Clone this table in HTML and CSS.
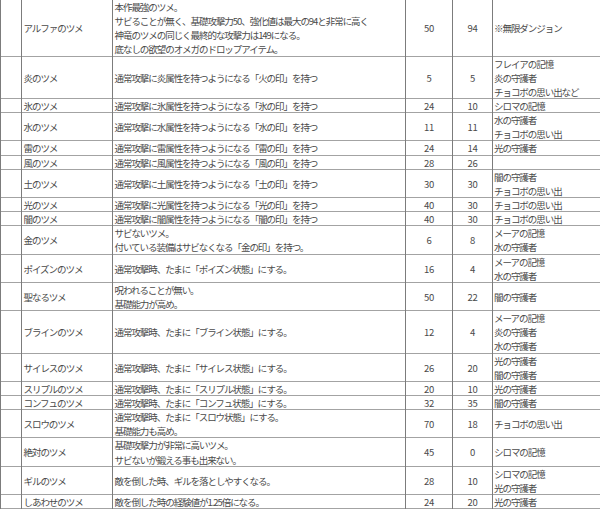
FILE: index.html
```html
<!DOCTYPE html>
<html lang="ja">
<head>
<meta charset="utf-8">
<title>ツメ一覧</title>
<link rel="stylesheet" href="styles.css">
</head>
<body>
<table class="claws">
  <colgroup>
    <col class="c-blank">
    <col class="c-name">
    <col class="c-desc">
    <col class="c-num">
    <col class="c-num2">
    <col class="c-src">
  </colgroup>
  <tbody>
    <tr>
      <td class="blank"></td>
      <td class="name">アルファのツメ</td>
      <td class="desc">本作最強のツメ。<br>サビることが無く、基礎攻撃力50、強化値は最大の94と非常に高く<br>神竜のツメの同じく最終的な攻撃力は149になる。<br>底なしの欲望のオメガのドロップアイテム。</td>
      <td class="num">50</td>
      <td class="num">94</td>
      <td class="src">※無限ダンジョン</td>
    </tr>
    <tr>
      <td class="blank"></td>
      <td class="name">炎のツメ</td>
      <td class="desc">通常攻撃に炎属性を持つようになる「火の印」を持つ</td>
      <td class="num">5</td>
      <td class="num">5</td>
      <td class="src">フレイアの記憶<br>炎の守護者<br>チョコボの思い出など</td>
    </tr>
    <tr>
      <td class="blank"></td>
      <td class="name">氷のツメ</td>
      <td class="desc">通常攻撃に氷属性を持つようになる「氷の印」を持つ</td>
      <td class="num">24</td>
      <td class="num">10</td>
      <td class="src">シロマの記憶</td>
    </tr>
    <tr>
      <td class="blank"></td>
      <td class="name">水のツメ</td>
      <td class="desc">通常攻撃に水属性を持つようになる「水の印」を持つ</td>
      <td class="num">11</td>
      <td class="num">11</td>
      <td class="src">水の守護者<br>チョコボの思い出</td>
    </tr>
    <tr>
      <td class="blank"></td>
      <td class="name">雷のツメ</td>
      <td class="desc">通常攻撃に雷属性を持つようになる「雷の印」を持つ</td>
      <td class="num">24</td>
      <td class="num">14</td>
      <td class="src">光の守護者</td>
    </tr>
    <tr>
      <td class="blank"></td>
      <td class="name">風のツメ</td>
      <td class="desc">通常攻撃に風属性を持つようになる「風の印」を持つ</td>
      <td class="num">28</td>
      <td class="num">26</td>
      <td class="src"></td>
    </tr>
    <tr>
      <td class="blank"></td>
      <td class="name">土のツメ</td>
      <td class="desc">通常攻撃に土属性を持つようになる「土の印」を持つ</td>
      <td class="num">30</td>
      <td class="num">30</td>
      <td class="src">闇の守護者<br>チョコボの思い出</td>
    </tr>
    <tr>
      <td class="blank"></td>
      <td class="name">光のツメ</td>
      <td class="desc">通常攻撃に光属性を持つようになる「光の印」を持つ</td>
      <td class="num">40</td>
      <td class="num">30</td>
      <td class="src">チョコボの思い出</td>
    </tr>
    <tr>
      <td class="blank"></td>
      <td class="name">闇のツメ</td>
      <td class="desc">通常攻撃に闇属性を持つようになる「闇の印」を持つ</td>
      <td class="num">40</td>
      <td class="num">30</td>
      <td class="src">チョコボの思い出</td>
    </tr>
    <tr>
      <td class="blank"></td>
      <td class="name">金のツメ</td>
      <td class="desc">サビないツメ。<br>付いている装備はサビなくなる「金の印」を持つ。</td>
      <td class="num">6</td>
      <td class="num">8</td>
      <td class="src">メーアの記憶<br>水の守護者</td>
    </tr>
    <tr>
      <td class="blank"></td>
      <td class="name">ポイズンのツメ</td>
      <td class="desc">通常攻撃時、たまに「ポイズン状態」にする。</td>
      <td class="num">16</td>
      <td class="num">4</td>
      <td class="src">メーアの記憶<br>水の守護者</td>
    </tr>
    <tr>
      <td class="blank"></td>
      <td class="name">聖なるツメ</td>
      <td class="desc">呪われることが無い。<br>基礎能力が高め。</td>
      <td class="num">50</td>
      <td class="num">22</td>
      <td class="src">闇の守護者</td>
    </tr>
    <tr>
      <td class="blank"></td>
      <td class="name">ブラインのツメ</td>
      <td class="desc">通常攻撃時、たまに「ブライン状態」にする。</td>
      <td class="num">12</td>
      <td class="num">4</td>
      <td class="src">メーアの記憶<br>炎の守護者<br>水の守護者</td>
    </tr>
    <tr>
      <td class="blank"></td>
      <td class="name">サイレスのツメ</td>
      <td class="desc">通常攻撃時、たまに「サイレス状態」にする。</td>
      <td class="num">26</td>
      <td class="num">20</td>
      <td class="src">光の守護者<br>闇の守護者</td>
    </tr>
    <tr>
      <td class="blank"></td>
      <td class="name">スリプルのツメ</td>
      <td class="desc">通常攻撃時、たまに「スリプル状態」にする。</td>
      <td class="num">20</td>
      <td class="num">10</td>
      <td class="src">光の守護者</td>
    </tr>
    <tr>
      <td class="blank"></td>
      <td class="name">コンフュのツメ</td>
      <td class="desc">通常攻撃時、たまに「コンフュ状態」にする。</td>
      <td class="num">32</td>
      <td class="num">35</td>
      <td class="src">闇の守護者</td>
    </tr>
    <tr>
      <td class="blank"></td>
      <td class="name">スロウのツメ</td>
      <td class="desc">通常攻撃時、たまに「スロウ状態」にする。<br>基礎能力も高め。</td>
      <td class="num">70</td>
      <td class="num">18</td>
      <td class="src">チョコボの思い出</td>
    </tr>
    <tr>
      <td class="blank"></td>
      <td class="name">絶対のツメ</td>
      <td class="desc">基礎攻撃力が非常に高いツメ。<br>サビないが鍛える事も出来ない。</td>
      <td class="num">45</td>
      <td class="num">0</td>
      <td class="src">シロマの記憶</td>
    </tr>
    <tr>
      <td class="blank"></td>
      <td class="name">ギルのツメ</td>
      <td class="desc">敵を倒した時、ギルを落としやすくなる。</td>
      <td class="num">28</td>
      <td class="num">10</td>
      <td class="src">シロマの記憶<br>光の守護者</td>
    </tr>
    <tr>
      <td class="blank"></td>
      <td class="name">しあわせのツメ</td>
      <td class="desc">敵を倒した時の経験値が1.25倍になる。</td>
      <td class="num">24</td>
      <td class="num">20</td>
      <td class="src">光の守護者</td>
    </tr>
  </tbody>
</table>
</body>
</html>
```

FILE: styles.css
```css
html, body {
  margin: 0;
  padding: 0;
  background: #ffffff;
}

body {
  width: 600px;
  height: 509px;
  overflow: hidden;
}

.claws {
  border-collapse: separate;
  border-spacing: 0;
  table-layout: fixed;
  width: 600px;
  font-family: "Noto Sans CJK JP", "Noto Sans", sans-serif;
  font-size: 9.5px;
  letter-spacing: -1.05px;
  line-height: 14.139px;
  color: #4a4a4a;
}

.c-blank { width: 22px; }
.c-name  { width: 91px; }
.c-desc  { width: 293px; }
.c-num   { width: 47px; }
.c-num2  { width: 40px; }
.c-src   { width: 107px; }

.claws td {
  padding: 0 0 0 1.5px;
  vertical-align: middle;
  white-space: nowrap;
  overflow: hidden;
  box-shadow: inset -1px 0 0 #7c7c7c, inset 0 -1px 0 #a3a3a3;
}

.claws td.blank {
  box-shadow: inset 1px 0 0 #7c7c7c, inset -1px 0 0 #7c7c7c, inset 0 -1px 0 #a3a3a3;
}

.claws td.num {
  text-align: center;
  letter-spacing: -0.2px;
  padding: 0 1px 0 0;
}

.claws td.src {
  padding-left: 1px;
  box-shadow: inset 0 -1px 0 #a3a3a3;
}
```
